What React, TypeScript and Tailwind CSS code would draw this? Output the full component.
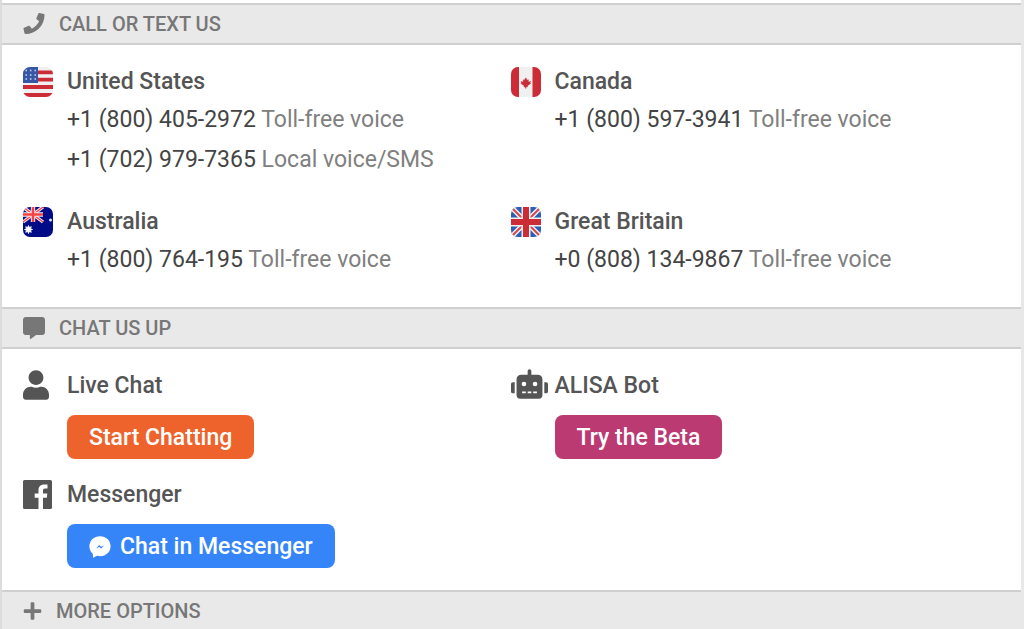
import type { ReactNode } from 'react';
import { FaCommentAlt, FaPhone, FaPlus, FaRobot, FaUser } from 'react-icons/fa';

interface PhoneNumber {
  number: string;
  label: string;
}

interface Region {
  name: string;
  flag: ReactNode;
  phones: PhoneNumber[];
}

function FlagUS() {
  return (
    <svg viewBox="0 0 30 30" className="h-[30px] w-[30px] rounded-[7px]" aria-hidden="true">
      <rect width="30" height="30" fill="#f0f0f0" />
      <path d="M0 3.5h30v3.7H0zM0 10.8h30v3.7H0zM0 18h30v4H0zM0 26h30v4H0z" fill="#cb2c35" />
      <rect width="15" height="16" fill="#3757a6" />
      {[3.5, 8, 12].map((y) =>
        [3.2, 7.7, 12.2].map((x) => (
          <circle key={`${x}-${y}`} cx={x} cy={y} r="0.9" fill="#b9c6e6" />
        ))
      )}
    </svg>
  );
}

function FlagCanada() {
  return (
    <svg viewBox="0 0 30 30" className="h-[30px] w-[30px] rounded-[7px]" aria-hidden="true">
      <rect width="30" height="30" fill="#f0f0f0" />
      <path d="M0 0h8v30H0zM21.5 0H30v30h-8.5z" fill="#cb2c35" />
      <path
        d="M14.8 10.8l1.5 2.4 1.2-.5-.2 2.3 2.3-.6-.6 1.5.7.5-3.2 2.3.1 1.200-1.500-.2v1.600h-.6v-1.600l-1.500.2.1-1.200-3.200-2.300.7-.5-.6-1.500 2.300.6-.2-2.300 1.200.5z"
        fill="#cb2c35"
        stroke="#cb2c35"
        strokeWidth="0.4"
      />
    </svg>
  );
}

function FlagAustralia() {
  return (
    <svg viewBox="0 0 30 30" className="h-[30px] w-[30px] rounded-[7px]" aria-hidden="true">
      <rect width="30" height="30" fill="#000b87" />
      <path d="M0 0l20 15M20 0L0 15" stroke="#f3e4ee" strokeWidth="3.4" />
      <path d="M0 0l20 15M20 0L0 15" stroke="#ff4040" strokeWidth="1.2" />
      <path d="M0 7.5h20M10 0v15" stroke="#f5eef4" strokeWidth="4.4" />
      <path d="M0 7.5h20M10 0v15" stroke="#f64340" strokeWidth="2.6" />
      <path
        d="M5.5 18.5l.8 2 2-.8-.8 2 2 .8-2 .8.8 2-2-.8-.8 2-.8-2-2 .8.8-2-2-.8 2-.8-.8-2 2 .8z"
        fill="#fff"
        stroke="#fff"
        strokeWidth="0.8"
      />
      <circle cx="27.5" cy="13" r="1.5" fill="#dfe2f6" />
    </svg>
  );
}

function FlagBritain() {
  return (
    <svg viewBox="0 0 30 30" className="h-[30px] w-[30px] rounded-[7px]" aria-hidden="true">
      <rect width="30" height="30" fill="#2a5fb4" />
      <path d="M0 0l30 30M30 0L0 30" stroke="#f0f0f0" strokeWidth="5" />
      <path d="M0 0l30 30M30 0L0 30" stroke="#d5474f" strokeWidth="2" />
      <path d="M0 15h30M15 0v30" stroke="#f0f0f0" strokeWidth="9" />
      <path d="M0 15h30M15 0v30" stroke="#cb2c35" strokeWidth="6" />
    </svg>
  );
}

function FacebookIcon() {
  return (
    <svg viewBox="0 32 448 448" className="mb-0.5 h-[29px] w-[29px]" fill="currentColor" aria-hidden="true">
      <path d="M448 56.7v398.5c0 13.7-11.1 24.7-24.7 24.7H309.1V306.5h58.2l8.7-67.6h-67v-43.2c0-19.6 5.4-32.9 33.5-32.9h35.8v-60.5c-6.2-.8-27.4-2.7-52.2-2.7-51.6 0-87 31.5-87 89.4v49.9h-58.4v67.6h58.4V480H24.7C11.1 480 0 468.9 0 455.3V56.7C0 43.1 11.1 32 24.7 32h398.5c13.7 0 24.8 11.1 24.8 24.7z" />
    </svg>
  );
}

function MessengerIcon() {
  return (
    <svg viewBox="0 0 22 22" className="h-[22px] w-[22px]" aria-hidden="true">
      <path
        d="M11 .3c6 0 10.600 4.300 10.600 10S17 20.200 11 20.200c-1 0-2-.1-2.900-.4L4 21.800l-.1-3.900C1.700 16.200.4 13.500.4 10.300.4 4.600 5 .3 11 .3z"
        fill="#fff"
      />
      <path d="M7 12.500l3.200-3.500 1.800 1.700 3.200-1.100-3 2.800-2-1.500z" fill="#3585f9" />
    </svg>
  );
}

const regions: Region[] = [
  {
    name: 'United States',
    flag: <FlagUS />,
    phones: [
      { number: '+1 (800) 405-2972', label: 'Toll-free voice' },
      { number: '+1 (702) 979-7365', label: 'Local voice/SMS' },
    ],
  },
  {
    name: 'Canada',
    flag: <FlagCanada />,
    phones: [{ number: '+1 (800) 597-3941', label: 'Toll-free voice' }],
  },
  {
    name: 'Australia',
    flag: <FlagAustralia />,
    phones: [{ number: '+1 (800) 764-195', label: 'Toll-free voice' }],
  },
  {
    name: 'Great Britain',
    flag: <FlagBritain />,
    phones: [{ number: '+0 (808) 134-9867', label: 'Toll-free voice' }],
  },
];

const channels = [
  {
    name: 'Live Chat',
    icon: <FaUser className="mb-0.5 h-[30px] w-[26px]" />,
    action: 'Start Chatting',
    color: 'bg-[#ee632c]',
  },
  {
    name: 'ALISA Bot',
    icon: <FaRobot className="mb-1 h-[30px] w-[37px]" />,
    action: 'Try the Beta',
    color: 'bg-[#bb3a72]',
  },
  {
    name: 'Messenger',
    icon: <FacebookIcon />,
    action: 'Chat in Messenger',
    actionIcon: <MessengerIcon />,
    color: 'bg-[#3585f9]',
  },
];

function SectionHeader({ icon, title }: { icon: ReactNode; title: string }) {
  return (
    <h2 className="flex h-[42px] items-center border-y-2 border-[#d0d0d0] bg-[#e9e9e9] pl-[21px] text-xl font-medium text-[#777]">
      {icon}
      {title}
    </h2>
  );
}

function Entry({ icon, name, children }: { icon: ReactNode; name: string; children: ReactNode }) {
  return (
    <div>
      <div className="flex h-9 items-center text-[#555]">
        <span className="w-11 shrink-0">{icon}</span>
        <h3 className="font-medium">{name}</h3>
      </div>
      <div className="pl-11">{children}</div>
    </div>
  );
}

export default function App() {
  return (
    <main className="min-h-screen border-r-3 border-l-2 border-r-[#e8e8e8] border-l-[#dcdcdc] bg-white pt-[3px] font-['Roboto',sans-serif] text-[23px]">
      <section>
        <SectionHeader icon={<FaPhone className="mr-[14px] h-[22px] w-[22px] pb-px" />} title="CALL OR TEXT US" />
        <div className="grid grid-cols-2 gap-y-6 pt-[19px] pr-[23px] pb-[27px] pl-[21px]">
          {regions.map((region) => (
            <Entry key={region.name} icon={region.flag} name={region.name}>
              {region.phones.map((phone) => (
                <p key={phone.number} className="leading-10 text-[#444]">
                  {phone.number} <span className="text-[#808080]">{phone.label}</span>
                </p>
              ))}
            </Entry>
          ))}
        </div>
      </section>

      <section>
        <SectionHeader icon={<FaCommentAlt className="mr-[14px] h-[22px] w-[22px]" />} title="CHAT US UP" />
        <div className="grid grid-cols-2 gap-y-[18px] pt-[19px] pr-[23px] pb-[22px] pl-[21px]">
          {channels.map((channel) => (
            <Entry key={channel.name} icon={channel.icon} name={channel.name}>
              <button
                type="button"
                className={`mt-[11px] flex h-11 items-center gap-[9px] rounded-lg px-[22px] pt-0.5 font-medium text-white ${channel.color}`}
              >
                {channel.actionIcon}
                {channel.action}
              </button>
            </Entry>
          ))}
        </div>
      </section>

      <section>
        <SectionHeader icon={<FaPlus className="mr-[14px] h-5 w-[19px]" />} title="MORE OPTIONS" />
      </section>
    </main>
  );
}
